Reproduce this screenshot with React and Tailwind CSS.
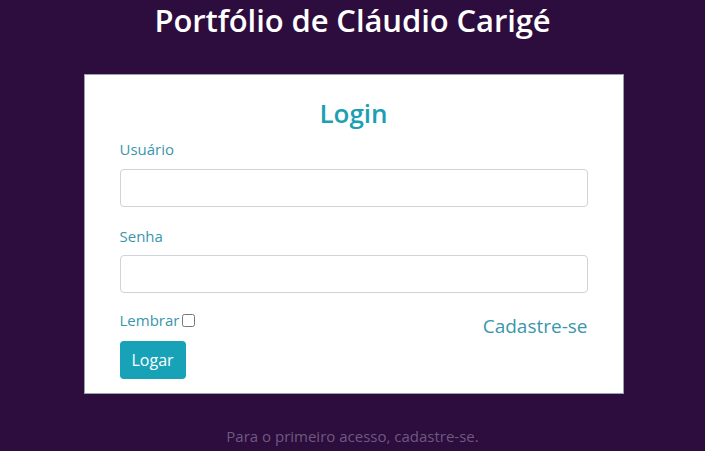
import React, { useState } from "react";

const App = () => {
  const [lembrar, setLembrar] = useState(false);

  return (
    <div
      className="min-h-screen bg-[#2d0c3e] flex flex-col items-center"
      style={{ fontFamily: '"Open Sans", "Noto Sans", sans-serif' }}
    >
      {/* Titulo */}
      <h1 className="text-[31px] font-semibold text-white leading-[38px] pt-[1px] tracking-[-0.1px]">
        Portfólio de Cláudio Carigé
      </h1>

      {/* Card de login */}
      <div className="mt-[35px] ml-[2px] w-[540px] bg-white border border-gray-400 px-[35px] pt-[20px] pb-[14px]">
        <h2 className="text-center text-[26px] font-semibold text-[#1d9fb3] leading-[36px]">
          Login
        </h2>

        <label className="block mt-[7px] text-[15px] text-[#3a96ab] leading-[22px]">
          Usuário
        </label>
        <input
          type="text"
          className="mt-[9px] block w-full h-[38px] rounded border border-[#cfd4d8] px-3"
        />

        <label className="block mt-[18px] text-[15px] text-[#3a96ab] leading-[22px]">
          Senha
        </label>
        <input
          type="password"
          className="mt-[8px] block w-full h-[38px] rounded border border-[#cfd4d8] px-3"
        />

        <div className="mt-[16px] flex justify-between items-start">
          <div className="flex flex-col items-start">
            <label className="flex items-center text-[15px] text-[#3a96ab] leading-[22px]">
              Lembrar
              <input
                type="checkbox"
                checked={lembrar}
                onChange={(e) => setLembrar(e.target.checked)}
                className="ml-[3px] w-[13px] h-[13px]"
              />
            </label>
            <button className="mt-[10px] h-[38px] px-[12px] rounded bg-[#17a2b8] text-white text-[16px]">
              Logar
            </button>
          </div>
          <a href="#" className="mt-[4px] text-[19px] text-[#3a96ab] leading-[26px]">
            Cadastre-se
          </a>
        </div>
      </div>

      <p className="mt-[31px] text-[15px] text-[#6f5a7f]">
        Para o primeiro acesso, cadastre-se.
      </p>
    </div>
  );
};

export default App;
